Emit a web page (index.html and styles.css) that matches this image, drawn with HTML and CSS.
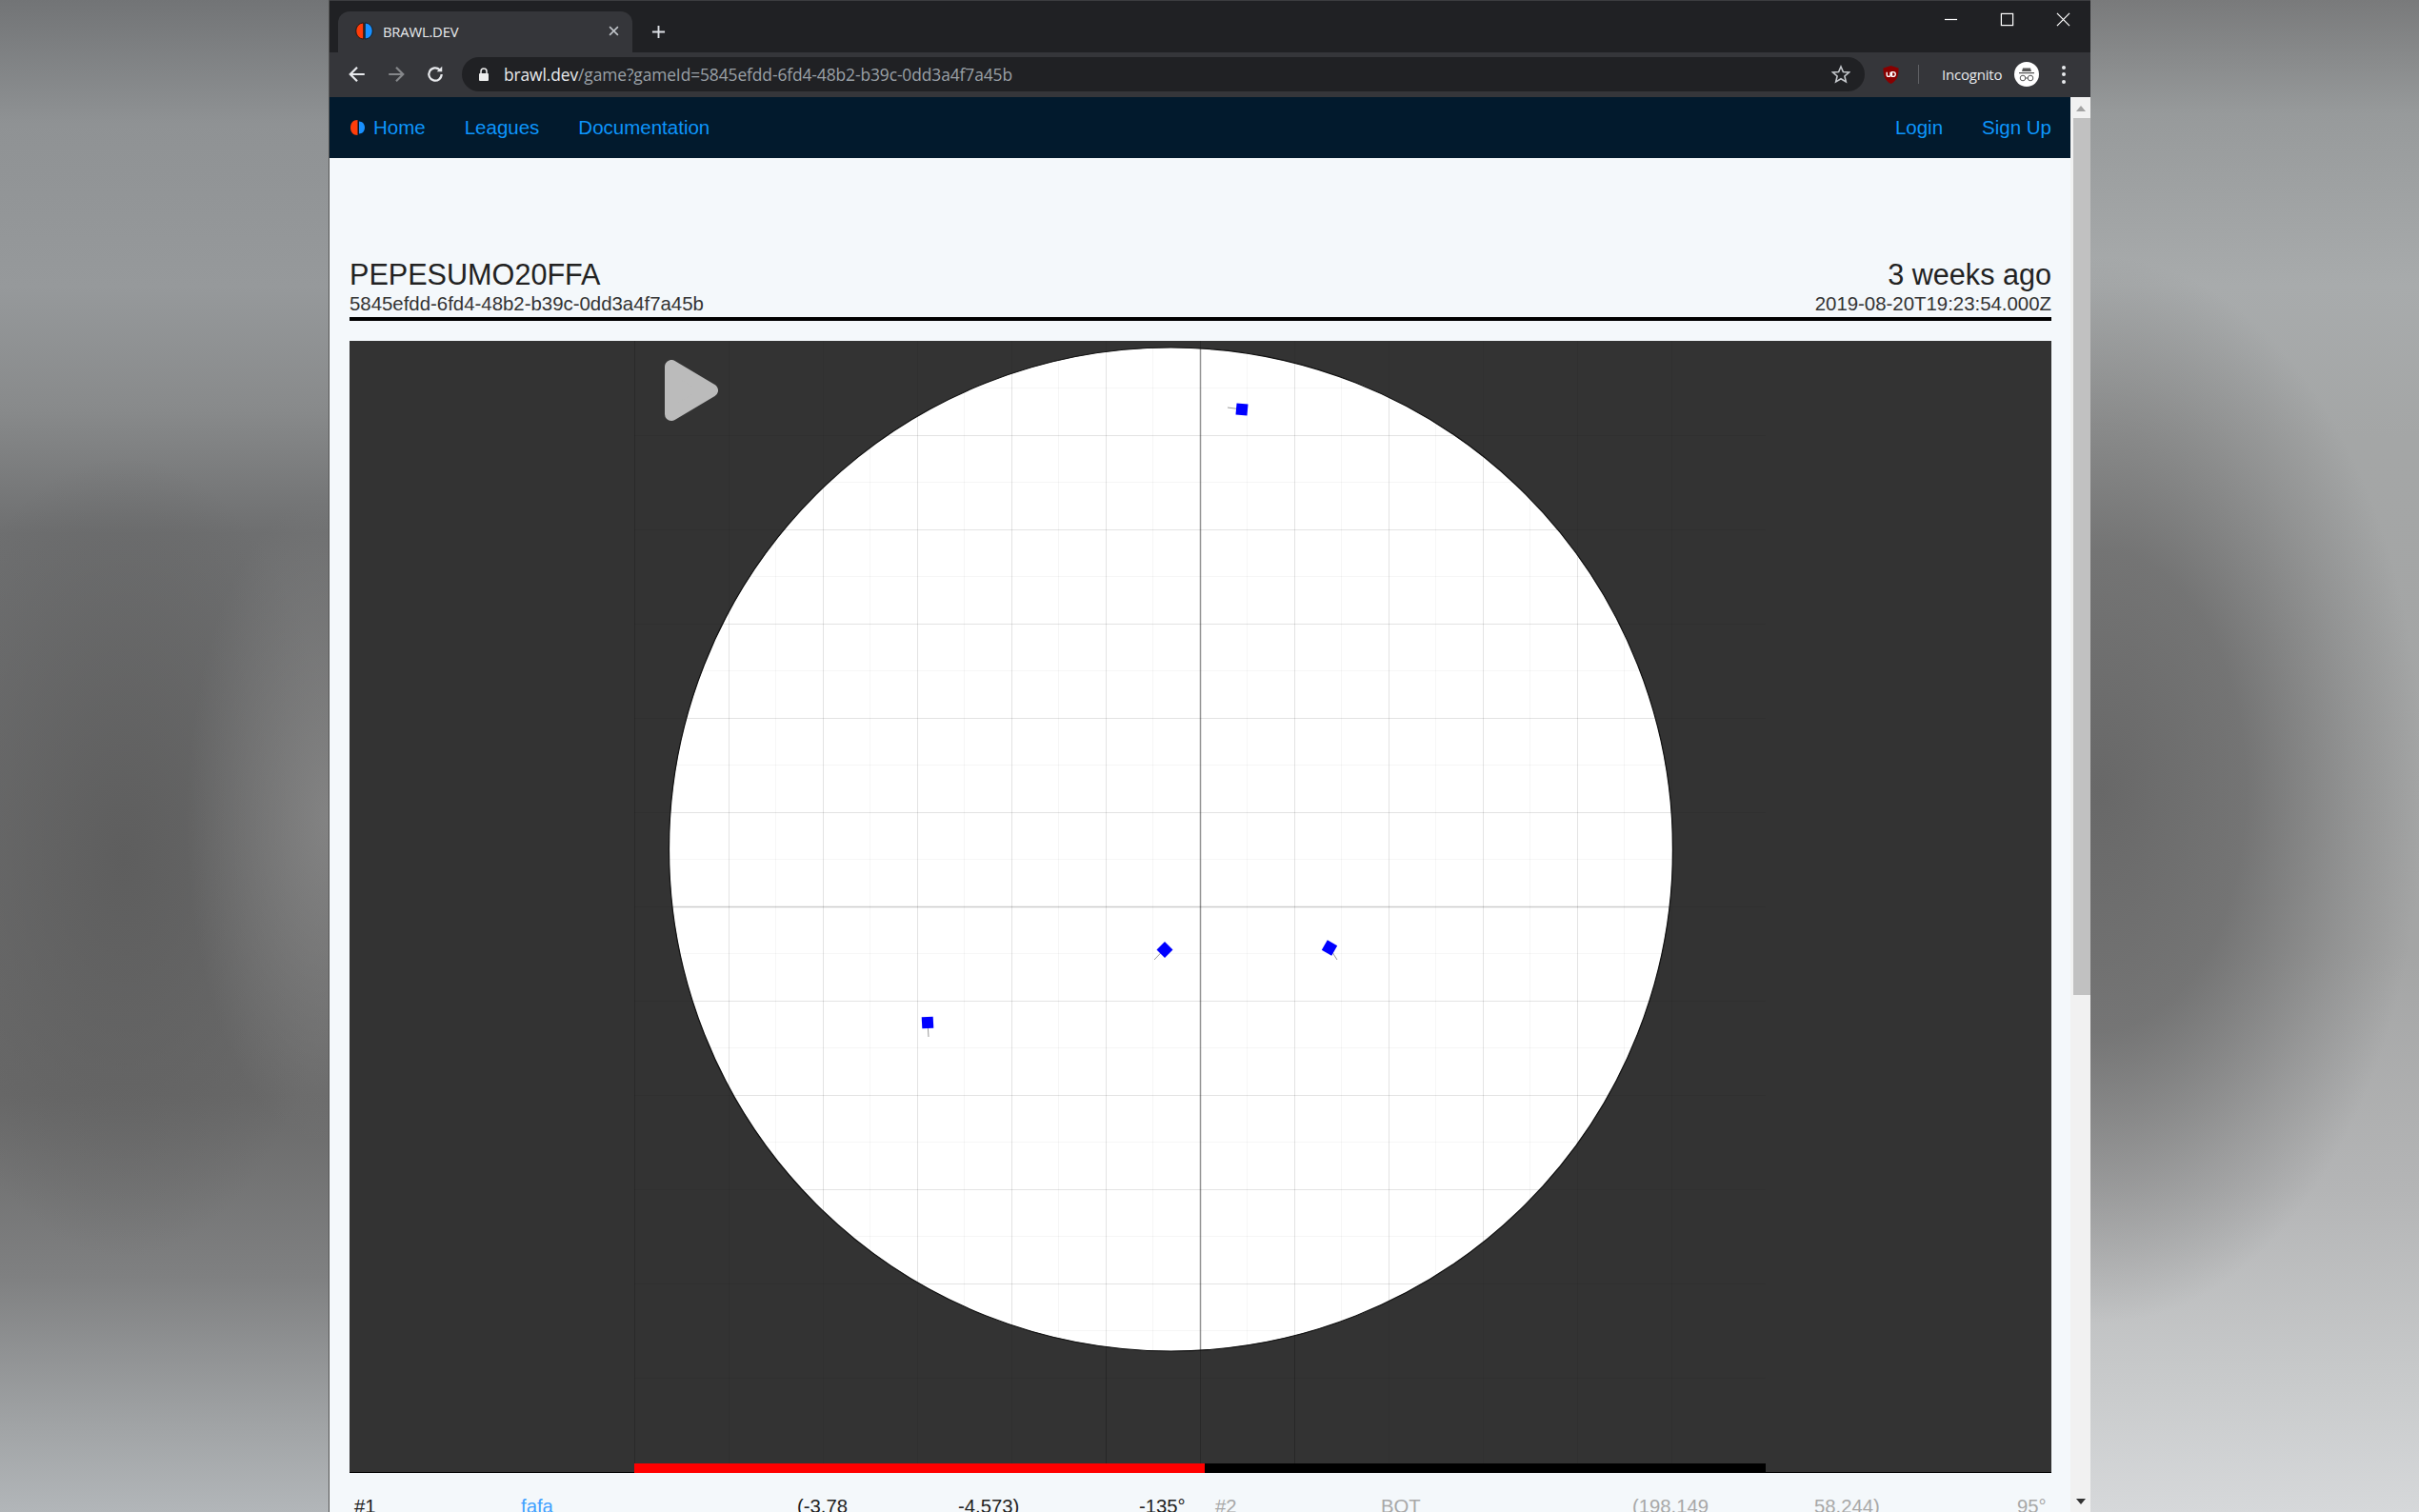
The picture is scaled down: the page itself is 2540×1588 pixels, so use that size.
FILE: index.html
```html
<!DOCTYPE html>
<html lang="en">
<head>
    <meta charset="UTF-8">
    <title>BRAWL.DEV</title>
    <link rel="stylesheet" href="styles.css">
</head>
<body>
    <div class="window">
        <!-- browser chrome -->
        <div class="tabstrip">
            <div class="tab">
                <svg class="favicon" viewBox="0 0 18 18">
                    <path d="M8.300 1C3.800 1 .8 4.700 .8 9s3 8 7.500 8z" fill="#ff3d0a" stroke="#111" stroke-width=".8"/>
                    <path d="M9.700 1c4.500 0 7.500 3.700 7.500 8s-3 8-7.500 8z" fill="#1890ff" stroke="#111" stroke-width=".8"/>
                </svg>
                <span class="tab-title">BRAWL.DEV</span>
                <svg class="tab-close" viewBox="0 0 10 10"><path d="M1 1l8 8M9 1l-8 8"/></svg>
            </div>
            <svg class="new-tab" viewBox="0 0 16 16"><path d="M8 1v14M1 8h14"/></svg>
            <div class="win-controls">
                <svg viewBox="0 0 16 16"><path d="M1 8h14"/></svg>
                <svg viewBox="0 0 16 16"><rect x="1.500" y="1.500" width="13" height="13"/></svg>
                <svg viewBox="0 0 16 16"><path d="M1 1l14 14M15 1L1 15"/></svg>
            </div>
        </div>
        <div class="toolbar">
            <svg class="tool" viewBox="0 0 18 18"><path d="M16 9H3M9 2.500L2.500 9 9 15.500"/></svg>
            <svg class="tool tool-off" viewBox="0 0 18 18"><path d="M2 9h13M9 2.500L15.500 9 9 15.500"/></svg>
            <svg class="tool" viewBox="0 0 18 18"><path d="M15 9a6 6 0 1 1-1.800-4.300"/><path class="solid" d="M15.500 1.500v5h-5z"/></svg>
            <div class="omnibox">
                <svg class="lock" viewBox="0 0 12 14"><path d="M3 6V4a3 3 0 0 1 6 0v2" fill="none" stroke="#eee" stroke-width="1.500"/><rect x="1" y="6" width="10" height="8" rx="1" fill="#eee"/></svg>
                <span class="url"><b>brawl.dev</b>/game?gameId=5845efdd-6fd4-48b2-b39c-0dd3a4f7a45b</span>
                <svg class="star" viewBox="0 0 20 20"><path d="M10 2l2.400 5.500 6 .5-4.500 4 1.400 5.900L10 14.800 4.700 17.900 6.100 12 1.600 8l6-.5z"/></svg>
            </div>
            <svg class="ublock" viewBox="0 0 20 22">
                <path d="M10 1l8.500 2.500c0 8-1.500 13.500-8.500 17.500C3 17 1.500 11.500 1.500 3.500z" fill="#800"/>
                <path d="M5.500 8v3a2 2 0 0 0 4 0V8M11 8h1.500a2.500 2.500 0 0 1 0 5H11z" fill="none" stroke="#fff" stroke-width="1.500"/>
            </svg>
            <span class="sep"></span>
            <span class="incognito">Incognito</span>
            <svg class="avatar" viewBox="0 0 26 26">
                <circle cx="13" cy="13" r="13" fill="#fff"/>
                <path d="M9 6.500h8l1 3.500H8zM5 11h16v1.200H5z" fill="#555"/>
                <circle cx="9" cy="17" r="2.800" fill="none" stroke="#555"/>
                <circle cx="17" cy="17" r="2.800" fill="none" stroke="#555"/>
                <path d="M11.800 17h2.400" stroke="#555"/>
            </svg>
            <div class="dots"><i></i><i></i><i></i></div>
        </div>

        <!-- page viewport -->
        <div class="viewport">
            <div class="page">
                <nav class="navbar">
                    <svg class="nav-logo" viewBox="0 0 18 16">
                        <path d="M8.500 0C3.500 0 1 3.500 1 8s2.500 8 7.500 8z" fill="#ff3d0a"/>
                        <path d="M10 1.500c3.500 0 6 2.800 6 6.500s-2.500 6.500-6 6.500z" fill="#1890ff"/>
                    </svg>
                    <a class="nav-link nav-home" href="#">Home</a>
                    <a class="nav-link" href="#">Leagues</a>
                    <a class="nav-link" href="#">Documentation</a>
                    <span class="nav-space"></span>
                    <a class="nav-link" href="#">Login</a>
                    <a class="nav-link" href="#">Sign Up</a>
                </nav>
                <main class="content">
                    <header class="game-head">
                        <div class="game-line">
                            <h1>PEPESUMO20FFA</h1>
                            <span class="ago">3 weeks ago</span>
                        </div>
                        <div class="game-line game-sub">
                            <span>5845efdd-6fd4-48b2-b39c-0dd3a4f7a45b</span>
                            <span>2019-08-20T19:23:54.000Z</span>
                        </div>
                    </header>
                    <div class="stage">
                        <svg class="arena" viewBox="0 0 1787 1189" width="1787" height="1189">
                            <defs>
                                <clipPath id="ring-clip"><circle cx="862.500" cy="534" r="527"/></clipPath>
                            </defs>
                            <!-- lines over the dark floor -->
                            <path class="floor-line" d="M398.500 0V1179M497.500 0V1179M596.500 0V1179M695.500 0V1179M794.500 0V1179M992.500 0V1179M1091.500 0V1179M1190.500 0V1179M1289.500 0V1179M1388.500 0V1179M299 99.500H1487M299 198.500H1487M299 297.500H1487M299 396.500H1487M299 495.500H1487M299 594.500H1487M299 693.500H1487M299 792.500H1487M299 891.500H1487M299 990.500H1487M299 1089.500H1487"/>
                            <path class="floor-axis" d="M893.500 0V1179M299.500 0V1179M794.500 1000V1179M992.500 1000V1179"/>
                            <circle class="ring" cx="862.500" cy="534" r="527"/>
                            <g clip-path="url(#ring-clip)">
                                <path class="grid-minor" d="M447.500 0V1179M546.500 0V1179M645.500 0V1179M744.500 0V1179M843.500 0V1179M942.500 0V1179M1041.500 0V1179M1140.500 0V1179M1239.500 0V1179M1338.500 0V1179M299 49.500H1487M299 148.500H1487M299 247.500H1487M299 346.500H1487M299 445.500H1487M299 544.500H1487M299 643.500H1487M299 742.500H1487M299 841.500H1487M299 940.500H1487M299 1039.500H1487"/>
                                <path class="grid-major" d="M398.500 0V1179M497.500 0V1179M596.500 0V1179M695.500 0V1179M794.500 0V1179M992.500 0V1179M1091.500 0V1179M1190.500 0V1179M1289.500 0V1179M1388.500 0V1179M299 99.500H1487M299 198.500H1487M299 297.500H1487M299 396.500H1487M299 495.500H1487M299 693.500H1487M299 792.500H1487M299 891.500H1487M299 990.500H1487M299 1089.500H1487"/>
                                <path class="grid-hline" d="M299 594.500H1487"/>
                                <path class="grid-axis" d="M893.500 0V1179"/>
                            </g>
                            <path class="tail" d="M937 72L922 70M855 639.500L845 650M1029 637.500L1037 650M607 716L608 731"/>
                            <rect class="bot" x="931" y="66" width="12" height="12" transform="rotate(5 937 72)"/>
                            <rect class="bot" x="850" y="633.500" width="12" height="12" transform="rotate(45 856 639.500)"/>
                            <rect class="bot" x="1023" y="631.500" width="12" height="12" transform="rotate(30 1029 637.500)"/>
                            <rect class="bot" x="601" y="710" width="12" height="12" transform="rotate(-3 607 716)"/>
                        </svg>
                        <svg class="play-btn" viewBox="0 0 56 64"><path d="M7 7v50l42-25z"/></svg>
                        <div class="progress"><div class="progress-done"></div></div>
                    </div>
                    <div class="players">
                        <span>#1</span>
                        <a href="#">fafa</a>
                        <span>(-3.78</span>
                        <span>-4.573)</span>
                        <span>-135°</span>
                        <span class="dim">#2</span>
                        <span class="dim">BOT</span>
                        <span class="dim">(198.149</span>
                        <span class="dim">58.244)</span>
                        <span class="dim">95°</span>
                    </div>
                </main>
            </div>
            <div class="scrollbar">
                <div class="sb-arrow sb-up"></div>
                <div class="sb-thumb"></div>
                <div class="sb-arrow sb-down"></div>
            </div>
        </div>
    </div>
</body>
</html>
```

FILE: styles.css
```css
html, body {
    margin: 0;
    height: 100%;
    overflow: hidden;
}
body {
    font-family: "Liberation Sans", Arial, sans-serif;
    display: flex;
    background-color: #888;
    background-repeat: no-repeat;
    background-size: 346px 100%, 346px 100%, 346px 100%, 345px 100%, 345px 100%;
    background-position: 0 0, 0 0, 0 0, right 0 top 0, right 0 top 0;
    background-image:
        radial-gradient(ellipse 150px 340px at 346px 860px, rgba(135, 135, 135, .85) 0%, rgba(135, 135, 135, 0) 100%),
        radial-gradient(ellipse 230px 420px at 130px 900px, #5e5e5e 0%, rgba(94, 94, 94, 0) 100%),
        linear-gradient(180deg, #727476 0, #8f9294 130px, #96999b 300px, #888a8b 430px, #6e6f70 560px, #696969 1150px, #7f8081 1340px, #a1a4a6 1500px, #b2b6b9 1588px),
        radial-gradient(ellipse 340px 560px at 10px 830px, #686868 0%, rgba(104, 104, 104, .8) 45%, rgba(104, 104, 104, .3) 78%, rgba(104, 104, 104, 0) 100%),
        linear-gradient(180deg, #797a7b 0, #979a9b 120px, #a8abac 300px, #a4a6a6 460px, #a4a5a5 1000px, #b4b5b6 1250px, #c8cacb 1450px, #d6d8da 1588px);
}
a { text-decoration: none; }

.window {
    margin-left: 346px;
    width: 1849px;
    height: 1588px;
    display: flex;
    flex-direction: column;
    box-shadow: -1px 0 0 #555;
}

/* browser chrome */
.tabstrip {
    height: 55px;
    flex: none;
    background: #202124;
    display: flex;
    align-items: flex-end;
    position: relative;
    border-top: 1px solid #3c3d40;
    box-sizing: border-box;
}
.tab {
    width: 309px;
    height: 43px;
    margin-left: 9px;
    padding: 0 14px 2px 18px;
    box-sizing: border-box;
    background: #35363a;
    border-radius: 12px 12px 0 0;
    display: flex;
    align-items: center;
    color: #e8eaed;
}
.favicon { width: 19px; height: 19px; }
.tab-title {
    margin-left: 10px;
    font-family: "Open Sans", sans-serif;
    font-size: 14.800px;
    letter-spacing: -.2px;
    flex: 1;
}
.tab-close {
    width: 11px;
    height: 11px;
    fill: none;
    stroke: #bdc1c6;
    stroke-width: 1.500;
}
.new-tab {
    width: 15px;
    height: 15px;
    margin: 0 0 14px 20px;
    fill: none;
    stroke: #dee1e6;
    stroke-width: 2;
}
.win-controls {
    margin-left: auto;
    align-self: flex-start;
    display: flex;
    gap: 44px;
    padding: 12px 21px 0 0;
}
.win-controls svg {
    width: 15px;
    height: 15px;
    fill: none;
    stroke: #fff;
    stroke-width: 1.300;
}
.toolbar {
    height: 47px;
    flex: none;
    background: #35363a;
    display: flex;
    align-items: center;
    padding: 0 0 1px 19px;
    box-sizing: border-box;
}
.tool {
    width: 20px;
    height: 20px;
    margin-right: 21px;
    fill: none;
    stroke: #e8eaed;
    stroke-width: 2;
}
.tool-off { stroke: #85878a; }
.tool .solid { fill: #e8eaed; stroke: none; }
.omnibox {
    width: 1473px;
    height: 36px;
    margin-left: -3px;
    padding: 0 15px 0 17px;
    box-sizing: border-box;
    border-radius: 18px;
    background: #202124;
    display: flex;
    align-items: center;
}
.lock { width: 12px; height: 14px; }
.url {
    margin-left: 15px;
    flex: 1;
    font-family: "Open Sans", sans-serif;
    font-size: 17.400px;
    letter-spacing: -.1px;
    color: #9aa0a6;
    white-space: nowrap;
}
.url b { font-weight: 400; color: #e8eaed; }
.star {
    width: 20px;
    height: 20px;
    fill: none;
    stroke: #c4c7cb;
    stroke-width: 1.600;
}
.ublock { width: 19px; height: 21px; margin-left: 18px; }
.sep {
    width: 1px;
    height: 20px;
    margin-left: 19px;
    background: #5f6165;
}
.incognito {
    width: 74px;
    margin-left: 24px;
    font-family: "Open Sans", sans-serif;
    font-size: 15px;
    letter-spacing: -.2px;
    color: #e8eaed;
    white-space: nowrap;
}
.avatar { width: 26px; height: 26px; margin-left: 2px; }
.dots {
    margin-left: 24px;
    display: flex;
    flex-direction: column;
    gap: 3.500px;
}
.dots i {
    width: 4px;
    height: 4px;
    border-radius: 50%;
    background: #e8eaed;
}

/* page */
.viewport {
    flex: 1;
    min-height: 0;
    display: flex;
}
.page {
    width: 1828px;
    background: #f4f8fb;
}
.navbar {
    height: 64px;
    padding: 0 20px 0 21px;
    background: #021a2d;
    display: flex;
    align-items: center;
    gap: 41px;
    font-size: 20.500px;
}
.nav-logo { width: 18px; height: 16px; }
.nav-home { margin-left: -34px; }
.nav-link { color: #0d95fb; }
.nav-space { flex: 1; }
.content { padding: 0 20px 0 21px; }
.game-head { padding-top: 104px; border-bottom: 4px solid #000; color: #222; }
.game-line {
    display: flex;
    justify-content: space-between;
    align-items: baseline;
}
h1, .ago {
    margin: 0;
    font-size: 30.600px;
    font-weight: 400;
    line-height: 36px;
}
.game-sub { font-size: 20.400px; line-height: 27px; color: #333; }
.stage {
    position: relative;
    height: 1189px;
    margin-top: 21px;
    background: #333;
    border-bottom: 1px solid #000;
    box-sizing: border-box;
}
.arena { display: block; }
.floor-line { stroke: rgba(0, 0, 0, .05); fill: none; }
.floor-axis { stroke: rgba(0, 0, 0, .18); fill: none; }
.ring { fill: #fff; stroke: #111; stroke-width: 1.200; }
.grid-minor { stroke: rgba(0, 0, 0, .035); fill: none; }
.grid-major { stroke: rgba(0, 0, 0, .11); fill: none; }
.grid-hline { stroke: rgba(0, 0, 0, .2); stroke-width: 1.500; fill: none; }
.grid-axis { stroke: rgba(0, 0, 0, .42); stroke-width: 1.500; fill: none; }
.tail { stroke: #9a9a9a; stroke-width: 1; fill: none; }
.bot { fill: #00f; }
.play-btn {
    position: absolute;
    left: 331px;
    top: 20px;
    width: 56px;
    height: 64px;
    fill: #bbb;
    stroke: #bbb;
    stroke-width: 14;
    stroke-linejoin: round;
}
.progress {
    position: absolute;
    left: 299px;
    bottom: -1px;
    width: 1188px;
    height: 10px;
    background: #000;
}
.progress-done { width: 50.400%; height: 100%; background: #f00; }
.players {
    display: grid;
    grid-template-columns: 175px 290px 169px 190px 80px 174px 264px 191px 213px 1fr;
    padding: 22px 0 0 5px;
    font-size: 20.300px;
    line-height: 26px;
    color: #222;
    white-space: nowrap;
}
.players a { color: #40a0ff; }
.players .dim { color: #a8a8a8; }

/* scrollbar */
.scrollbar {
    width: 21px;
    background: #f1f1f1;
    display: flex;
    flex-direction: column;
    position: relative;
}
.sb-thumb {
    position: absolute;
    top: 22px;
    left: 3px;
    right: 0;
    height: 921px;
    background: #c1c1c1;
}
.sb-arrow {
    position: absolute;
    left: 6px;
    width: 0;
    height: 0;
    border-left: 5px solid transparent;
    border-right: 5px solid transparent;
}
.sb-up { top: 9px; border-bottom: 6px solid #a3a3a3; }
.sb-down { bottom: 8px; border-top: 6px solid #333; }
```
